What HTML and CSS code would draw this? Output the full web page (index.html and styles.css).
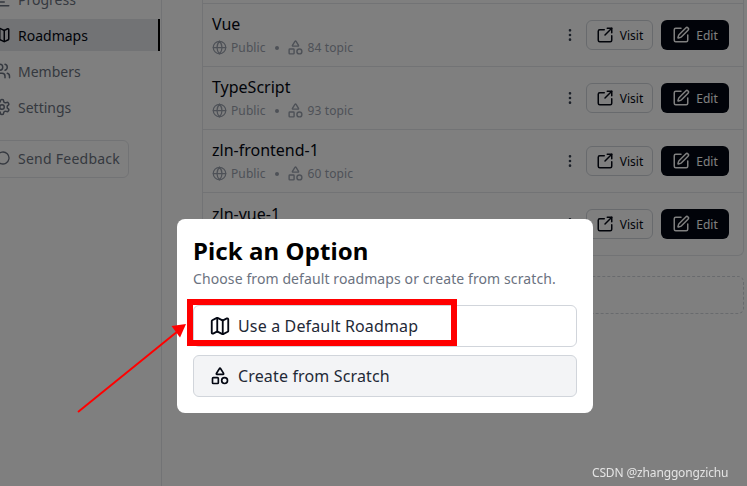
FILE: index.html
```html
<!DOCTYPE html>
<html>
<head>
  <title>Roadmaps</title>
  <link rel="stylesheet" href="styles.css">
</head>
<body>
  <svg class="sprite" xmlns="http://www.w3.org/2000/svg">
    <symbol id="i-map" viewBox="0 0 24 24"><path d="M14.106 5.553a2 2 0 0 0 1.788 0l3.659-1.83A1 1 0 0 1 21 4.619v12.764a1 1 0 0 1-.553.894l-4.553 2.277a2 2 0 0 1-1.788 0l-4.212-2.106a2 2 0 0 0-1.788 0l-3.659 1.83A1 1 0 0 1 3 19.381V6.618a1 1 0 0 1 .553-.894l4.553-2.277a2 2 0 0 1 1.788 0z"/><path d="M15 5.764v15"/><path d="M9 3.236v15"/></symbol>
    <symbol id="i-shapes" viewBox="0 0 24 24"><path d="M8.3 10a.7.7 0 0 1-.626-1.079L11.4 3a.7.7 0 0 1 1.198-.043L16.3 8.9a.7.7 0 0 1-.572 1.1Z"/><rect x="3" y="14" width="7" height="7" rx="1"/><circle cx="17.5" cy="17.5" r="3.5"/></symbol>
    <symbol id="i-globe" viewBox="0 0 24 24"><circle cx="12" cy="12" r="10"/><path d="M12 2a14.5 14.5 0 0 0 0 20 14.5 14.5 0 0 0 0-20"/><path d="M2 12h20"/></symbol>
    <symbol id="i-link" viewBox="0 0 24 24"><path d="M21 13v6a2 2 0 0 1-2 2H5a2 2 0 0 1-2-2V7a2 2 0 0 1 2-2h6"/><path d="m21 3-9 9"/><path d="M15 3h6v6"/></symbol>
    <symbol id="i-edit" viewBox="0 0 24 24"><path d="M12 3H5a2 2 0 0 0-2 2v14a2 2 0 0 0 2 2h14a2 2 0 0 0 2-2v-7"/><path d="M18.375 2.625a1 1 0 0 1 3 3l-9.013 9.014a2 2 0 0 1-.853.505l-2.873.84a.5.5 0 0 1-.62-.62l.84-2.873a2 2 0 0 1 .506-.852z"/></symbol>
    <symbol id="i-more" viewBox="0 0 24 24"><circle cx="12" cy="12" r="1"/><circle cx="12" cy="5" r="1"/><circle cx="12" cy="19" r="1"/></symbol>
    <symbol id="i-users" viewBox="0 0 24 24"><path d="M16 21v-2a4 4 0 0 0-4-4H6a4 4 0 0 0-4 4v2"/><circle cx="9" cy="7" r="4"/><path d="M22 21v-2a4 4 0 0 0-3-3.87"/><path d="M16 3.13a4 4 0 0 1 0 7.75"/></symbol>
    <symbol id="i-gear" viewBox="0 0 24 24"><path d="M12.22 2h-.44a2 2 0 0 0-2 2v.18a2 2 0 0 1-1 1.73l-.43.25a2 2 0 0 1-2 0l-.15-.08a2 2 0 0 0-2.73.73l-.22.38a2 2 0 0 0 .73 2.73l.15.1a2 2 0 0 1 1 1.72v.51a2 2 0 0 1-1 1.74l-.15.09a2 2 0 0 0-.73 2.73l.22.38a2 2 0 0 0 2.73.73l.15-.08a2 2 0 0 1 2 0l.43.25a2 2 0 0 1 1 1.73V20a2 2 0 0 0 2 2h.44a2 2 0 0 0 2-2v-.18a2 2 0 0 1 1-1.73l.43-.25a2 2 0 0 1 2 0l.15.08a2 2 0 0 0 2.73-.73l.22-.39a2 2 0 0 0-.73-2.73l-.15-.08a2 2 0 0 1-1-1.74v-.5a2 2 0 0 1 1-1.74l.15-.09a2 2 0 0 0 .73-2.73l-.22-.38a2 2 0 0 0-2.73-.73l-.15.08a2 2 0 0 1-2 0l-.43-.25a2 2 0 0 1-1-1.73V4a2 2 0 0 0-2-2z"/><circle cx="12" cy="12" r="3"/></symbol>
    <symbol id="i-chat" viewBox="0 0 24 24"><path d="M7.9 20A9 9 0 1 0 4 16.1L2 22Z"/></symbol>
    <symbol id="i-progress" viewBox="0 0 24 24"><path d="M3 3v16a2 2 0 0 0 2 2h16"/><path d="M7 16h8"/><path d="M7 11h12"/><path d="M7 6h3"/></symbol>
  </svg>

  <div class="shell">
    <aside class="sidebar">
      <a class="nav-item"><svg class="icon"><use href="#i-progress"/></svg>Progress</a>
      <a class="nav-item active"><svg class="icon"><use href="#i-map"/></svg>Roadmaps</a>
      <a class="nav-item"><svg class="icon"><use href="#i-users"/></svg>Members</a>
      <a class="nav-item"><svg class="icon"><use href="#i-gear"/></svg>Settings</a>
      <a class="feedback"><svg class="icon"><use href="#i-chat"/></svg>Send Feedback</a>
    </aside>

    <main class="content">
      <div class="list">
        <div class="row">
          <div class="info">
            <div class="name">Vue</div>
            <div class="meta"><svg class="icon globe"><use href="#i-globe"/></svg>Public<span class="dot"></span><svg class="icon shapes"><use href="#i-shapes"/></svg>84 topic</div>
          </div>
          <svg class="icon more"><use href="#i-more"/></svg>
          <a class="btn visit"><svg class="icon"><use href="#i-link"/></svg>Visit</a>
          <a class="btn edit"><svg class="icon"><use href="#i-edit"/></svg>Edit</a>
        </div>
        <div class="row">
          <div class="info">
            <div class="name">TypeScript</div>
            <div class="meta"><svg class="icon globe"><use href="#i-globe"/></svg>Public<span class="dot"></span><svg class="icon shapes"><use href="#i-shapes"/></svg>93 topic</div>
          </div>
          <svg class="icon more"><use href="#i-more"/></svg>
          <a class="btn visit"><svg class="icon"><use href="#i-link"/></svg>Visit</a>
          <a class="btn edit"><svg class="icon"><use href="#i-edit"/></svg>Edit</a>
        </div>
        <div class="row">
          <div class="info">
            <div class="name">zln-frontend-1</div>
            <div class="meta"><svg class="icon globe"><use href="#i-globe"/></svg>Public<span class="dot"></span><svg class="icon shapes"><use href="#i-shapes"/></svg>60 topic</div>
          </div>
          <svg class="icon more"><use href="#i-more"/></svg>
          <a class="btn visit"><svg class="icon"><use href="#i-link"/></svg>Visit</a>
          <a class="btn edit"><svg class="icon"><use href="#i-edit"/></svg>Edit</a>
        </div>
        <div class="row">
          <div class="info">
            <div class="name">zln-vue-1</div>
            <div class="meta"></div>
          </div>
          <svg class="icon more"><use href="#i-more"/></svg>
          <a class="btn visit"><svg class="icon"><use href="#i-link"/></svg>Visit</a>
          <a class="btn edit"><svg class="icon"><use href="#i-edit"/></svg>Edit</a>
        </div>
      </div>
      <div class="add-box"></div>
    </main>
  </div>

  <div class="overlay">
    <div class="modal">
      <h2 class="modal-title">Pick an Option</h2>
      <p class="modal-desc">Choose from default roadmaps or create from scratch.</p>
      <a class="option"><svg class="icon"><use href="#i-map"/></svg>Use a Default Roadmap</a>
      <a class="option alt"><svg class="icon"><use href="#i-shapes"/></svg>Create from Scratch</a>
    </div>
  </div>

  <!-- red markup drawn on top of the screenshot -->
  <svg class="markup" viewBox="0 0 747 486" xmlns="http://www.w3.org/2000/svg">
    <rect x="190" y="302" width="264" height="41" fill="none" stroke="#ff0000" stroke-width="6"/>
    <path d="M78 412 L178 331" stroke="#ff0000" stroke-width="2" fill="none"/>
    <path d="M186 324 L171.500 326 L180 337.500 Z" fill="#ff0000"/>
  </svg>

  <div class="watermark">CSDN @zhanggongzichu</div>
</body>
</html>
```

FILE: styles.css
```css
* {
  box-sizing: border-box;
}

html, body {
  height: 100%;
}

body {
  margin: 0;
  overflow: hidden;
  background-color: #ffffff;
  font-family: "Noto Sans", Arial, sans-serif;
  color: #030712;
}

.sprite {
  display: none;
}

.icon {
  width: 18px;
  height: 18px;
  flex: none;
  fill: none;
  stroke: currentColor;
  stroke-width: 2;
  stroke-linecap: round;
  stroke-linejoin: round;
}

.shell {
  display: flex;
  margin-top: -19px;
  height: 505px;
}

/* sidebar, scrolled partly off the left edge */
.sidebar {
  width: 162px;
  flex: none;
  border-right: 1px solid #e5e7eb;
}

.nav-item {
  display: flex;
  align-items: center;
  gap: 7px;
  height: 36px;
  margin-left: -7px;
  margin-right: 1px;
  font-size: 14px;
  color: #6b7280;
}

.nav-item.active {
  height: 32px;
  margin-top: 2px;
  margin-bottom: 2px;
  color: #030712;
  background-color: #e5e7eb;
  border-right: 2px solid #000000;
}

.feedback {
  display: flex;
  align-items: center;
  gap: 7px;
  width: 136px;
  height: 38px;
  margin-left: -7px;
  margin-top: 15px;
  padding: 0 0 2px 1px;
  border: 1px solid #e5e7eb;
  border-radius: 6px;
  font-size: 14px;
  letter-spacing: 0.25px;
  color: #6b7280;
}

.feedback .icon {
  width: 16px;
  height: 16px;
}

.content {
  flex: 1;
  padding: 0 3px 0 40px;
}

.list {
  padding-top: 22px;
  border-left: 1px solid #e5e7eb;
  border-right: 1px solid #e5e7eb;
  border-bottom: 1px solid #e5e7eb;
  border-radius: 0 0 6px 6px;
}

.row {
  display: flex;
  align-items: center;
  height: 63px;
  padding: 0 14px 0 9px;
  border-top: 1px solid #e5e7eb;
}

.info {
  flex: 1;
  padding-bottom: 2px;
}

.name {
  font-size: 16px;
  line-height: 24px;
}

.meta {
  display: flex;
  align-items: center;
  gap: 4px;
  min-height: 16px;
  margin-top: 3px;
  font-size: 12px;
  line-height: 16px;
  letter-spacing: 0.1px;
  color: #9ca3af;
}

.globe {
  width: 15px;
  height: 15px;
}

.shapes {
  width: 17px;
  height: 17px;
}

.dot {
  width: 4px;
  height: 4px;
  margin: 0 4px 0 5px;
  border-radius: 50%;
  background-color: #9ca3af;
}

.more {
  width: 16px;
  height: 16px;
  color: #374151;
  margin-right: 8px;
}

.btn {
  display: flex;
  align-items: center;
  justify-content: center;
  gap: 6px;
  width: 67px;
  height: 30px;
  border-radius: 6px;
  font-size: 12px;
}

.visit {
  border: 1px solid #d1d5db;
}

.edit {
  width: 68px;
  margin-left: 8px;
  background-color: #030712;
  color: #ffffff;
}

.add-box {
  height: 38px;
  margin-top: 20px;
  border: 1px dashed #d1d5db;
  border-radius: 6px;
}

/* dimmed backdrop and the dialog */
.overlay {
  position: fixed;
  inset: 0;
  padding: 219px 0 0 177px;
  background-color: rgba(0, 0, 0, 0.5);
}

.modal {
  width: 416px;
  height: 194px;
  padding: 16px;
  border-radius: 8px;
  background-color: #ffffff;
}

.modal-title {
  margin: 0;
  font-size: 24px;
  line-height: 32px;
  font-weight: 700;
  letter-spacing: 0.1px;
  color: #000000;
}

.modal-desc {
  margin: 0 0 14px;
  font-size: 14px;
  line-height: 24px;
  letter-spacing: 0.1px;
  color: #6b7280;
}

.option {
  display: flex;
  align-items: center;
  gap: 7px;
  height: 42px;
  margin-bottom: 8px;
  padding-left: 15px;
  border: 1px solid #d1d5db;
  border-radius: 6px;
  font-size: 16px;
  letter-spacing: 0.15px;
  color: #1f2937;
}

.option .icon {
  width: 22px;
  height: 22px;
  color: #030712;
}

.option.alt {
  background-color: #f3f4f6;
  gap: 8px;
  padding-left: 16px;
}

.option.alt .icon {
  width: 20px;
  height: 20px;
}

.markup {
  position: fixed;
  left: 0;
  top: 0;
  width: 747px;
  height: 486px;
}

.watermark {
  position: fixed;
  left: 592px;
  top: 465px;
  font-size: 12px;
  line-height: 16px;
  letter-spacing: -0.15px;
  color: #e4e4e4;
}
```
